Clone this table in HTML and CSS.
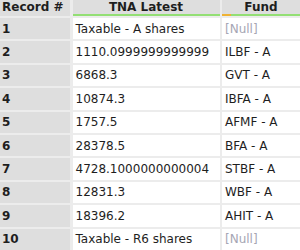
FILE: index.html
```html
<!DOCTYPE html>
<html>
<head>
<meta charset="utf-8">
<link rel="stylesheet" href="styles.css">
</head>
<body>
<div class="grid">
  <div class="hd hd-rec">Record #</div>
  <div class="hd hd-tna">TNA Latest</div>
  <div class="hd hd-fund">Fund</div>

  <div class="rec">1</div><div class="cell">Taxable - A shares</div><div class="cell null">[Null]</div>
  <div class="rec">2</div><div class="cell">1110.0999999999999</div><div class="cell">ILBF - A</div>
  <div class="rec">3</div><div class="cell">6868.3</div><div class="cell">GVT - A</div>
  <div class="rec">4</div><div class="cell">10874.3</div><div class="cell">IBFA - A</div>
  <div class="rec">5</div><div class="cell">1757.5</div><div class="cell">AFMF - A</div>
  <div class="rec">6</div><div class="cell">28378.5</div><div class="cell">BFA - A</div>
  <div class="rec">7</div><div class="cell">4728.1000000000004</div><div class="cell">STBF - A</div>
  <div class="rec">8</div><div class="cell">12831.3</div><div class="cell">WBF - A</div>
  <div class="rec">9</div><div class="cell">18396.2</div><div class="cell">AHIT - A</div>
  <div class="rec">10</div><div class="cell">Taxable - R6 shares</div><div class="cell null">[Null]</div>
</div>
</body>
</html>
```
FILE: styles.css
```css
html, body {
  margin: 0;
  padding: 0;
  background: #ececec;
}
body {
  width: 300px;
  height: 250px;
  overflow: hidden;
  font-family: "DejaVu Sans", "Liberation Sans", sans-serif;
  font-size: 12px;
  color: #1e1e1e;
}
.grid {
  display: grid;
  grid-template-columns: 70px 147px 1fr;
  grid-template-rows: 16px;
  grid-auto-rows: 21.4px;
  column-gap: 2.5px;
  row-gap: 2px;
  background: #ececec;
}
.hd {
  box-sizing: border-box;
  height: 16px;
  background: #dedede;
  font-weight: bold;
  display: flex;
  align-items: center;
  white-space: nowrap;
  padding-bottom: 2px;
}
.hd-rec {
  padding-left: 2px;
}
.hd-tna,
.hd-fund {
  justify-content: center;
  padding-bottom: 0;
  border-bottom: 2px solid #93df74;
}
.hd-fund {
  border-image: linear-gradient(to right, #efb234 0, #efb234 10px, #93df74 10px) 1;
}
.rec {
  background: #dedede;
  font-weight: bold;
  padding-left: 2px;
  display: flex;
  align-items: center;
}
.cell {
  background: #ffffff;
  padding-left: 3px;
  display: flex;
  align-items: center;
  white-space: nowrap;
  overflow: hidden;
}
.null {
  color: #a6a6b4;
}
```
